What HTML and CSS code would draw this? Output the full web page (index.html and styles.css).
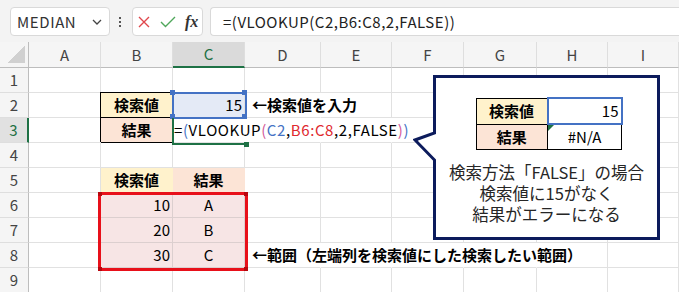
FILE: index.html
```html
<!DOCTYPE html>
<html lang="ja">
<head>
    <meta charset="UTF-8">
    <meta name="viewport" content="width=device-width, initial-scale=1.0">
    <title>VLOOKUP FALSE</title>
    <link rel="stylesheet" href="styles.css">
</head>
<body>
    <div class="toolbar">
        <div class="namebox">
            <span>MEDIAN</span>
            <svg width="10" height="6" viewBox="0 0 10 6"><polyline points="1,1 5,5 9,1" fill="none" stroke="#444" stroke-width="1.3"/></svg>
        </div>
        <div class="kebab"><i></i><i></i><i></i></div>
        <div class="fx-box">
            <svg width="12" height="12" viewBox="0 0 12 12"><path d="M1 1 L11 11 M11 1 L1 11" stroke="#e0474c" stroke-width="1.4" fill="none"/></svg>
            <svg width="16" height="12" viewBox="0 0 16 12"><polyline points="1,6 5.5,10.5 15,1" stroke="#4fa75b" stroke-width="1.4" fill="none"/></svg>
            <span class="fx">fx</span>
        </div>
        <div class="formula-bar">=(VLOOKUP(C2,B6:C8,2,FALSE))</div>
    </div>

    <div class="sheet">
        <div class="corner"></div>
        <div class="col">A</div><div class="col">B</div><div class="col on">C</div><div class="col">D</div><div class="col">E</div><div class="col">F</div><div class="col">G</div><div class="col">H</div><div class="col">I</div>

        <div class="row">1</div>
        <div class="c"></div><div class="c"></div><div class="c"></div><div class="c"></div><div class="c"></div><div class="c"></div><div class="c"></div><div class="c"></div><div class="c"></div>

        <div class="row">2</div>
        <div class="c"></div>
        <div class="c lbl key boxed">検索値</div>
        <div class="c num ref-fill">15</div>
        <div class="c note spill">←検索値を入力</div>
        <div class="c"></div><div class="c"></div><div class="c"></div><div class="c"></div><div class="c"></div>

        <div class="row on">3</div>
        <div class="c"></div>
        <div class="c lbl res boxed">結果</div>
        <div class="c spill formula">=<span class="p-blue">(</span>VLOOKUP<span class="p-pink">(</span><span class="r-blue">C2</span>,<span class="r-red">B6:C8</span>,2,FALSE<span class="p-pink">)</span><span class="p-blue">)</span></div>
        <div class="c spill"></div><div class="c spill"></div>
        <div class="c"></div><div class="c"></div><div class="c"></div><div class="c"></div>

        <div class="row">4</div>
        <div class="c"></div><div class="c"></div><div class="c"></div><div class="c"></div><div class="c"></div><div class="c"></div><div class="c"></div><div class="c"></div><div class="c"></div>

        <div class="row">5</div>
        <div class="c"></div>
        <div class="c lbl key">検索値</div>
        <div class="c lbl res">結果</div>
        <div class="c"></div><div class="c"></div><div class="c"></div><div class="c"></div><div class="c"></div><div class="c"></div>

        <div class="row">6</div>
        <div class="c"></div>
        <div class="c num rng">10</div>
        <div class="c ctr rng">A</div>
        <div class="c"></div><div class="c"></div><div class="c"></div><div class="c"></div><div class="c"></div><div class="c"></div>

        <div class="row">7</div>
        <div class="c"></div>
        <div class="c num rng">20</div>
        <div class="c ctr rng">B</div>
        <div class="c"></div><div class="c"></div><div class="c"></div><div class="c"></div><div class="c"></div><div class="c"></div>

        <div class="row">8</div>
        <div class="c"></div>
        <div class="c num rng">30</div>
        <div class="c ctr rng">C</div>
        <div class="c note spill">←範囲（左端列を検索値にした検索したい範囲）</div>
        <div class="c spill"></div><div class="c spill"></div><div class="c spill"></div>
        <div class="c"></div><div class="c"></div>

        <div class="row">9</div>
        <div class="c"></div><div class="c"></div><div class="c"></div><div class="c"></div><div class="c"></div><div class="c"></div><div class="c"></div><div class="c"></div><div class="c"></div>

        <!-- selections drawn over the grid -->
        <div class="sel-ref"></div>
        <div class="sel-active"></div>
        <div class="sel-range"></div>

        <div class="callout">
            <svg class="callout-shape" width="249" height="169" viewBox="0 0 249 169">
                <path d="M21.5 3.5 H245.5 V165.5 H21.5 V87 L2 67 L21.5 60 Z" fill="#fff" stroke="#0c1b5c" stroke-width="3" stroke-linejoin="miter"/>
            </svg>
            <table class="mini">
                <tr><td class="lbl key">検索値</td><td class="num hit">15</td></tr>
                <tr><td class="lbl res">結果</td><td class="ctr err">#N/A</td></tr>
            </table>
            <p class="callout-text">検索方法「FALSE」の場合<br>検索値に15がなく<br>結果がエラーになる</p>
        </div>
    </div>
</body>
</html>
```

FILE: styles.css
```css
body {
    margin: 0;
    width: 679px;
    height: 292px;
    overflow: hidden;
    background: #fff;
    font-family: "Noto Sans CJK JP", sans-serif;
    color: #000;
}

/* formula bar */
.toolbar {
    display: flex;
    align-items: flex-start;
    height: 42px;
    padding: 7px 0 0 10px;
    box-sizing: border-box;
    background: #f3f3f3;
}
.namebox {
    width: 100px;
    height: 29px;
    box-sizing: border-box;
    display: flex;
    align-items: center;
    justify-content: space-between;
    padding: 0 7px 0 6px;
    background: #fff;
    border: 1px solid #d9d9d9;
    border-radius: 4px;
    font-size: 15px;
    letter-spacing: 0.6px;
    color: #333;
}
.kebab {
    display: flex;
    flex-direction: column;
    gap: 2px;
    margin: 10px 11px 0 9px;
}
.kebab i {
    width: 2px;
    height: 2px;
    background: #555;
}
.fx-box {
    width: 71px;
    height: 29px;
    box-sizing: border-box;
    display: flex;
    align-items: center;
    gap: 10px;
    padding-left: 5px;
    background: #fff;
    border: 1px solid #d9d9d9;
    border-radius: 4px;
}
.fx {
    font-family: "Liberation Serif", serif;
    font-style: italic;
    font-weight: bold;
    font-size: 16px;
    color: #333;
    margin-left: -1px;
}
.formula-bar {
    flex: 1;
    height: 29px;
    box-sizing: border-box;
    margin-left: 7px;
    padding-left: 12px;
    background: #fff;
    border: 1px solid #d9d9d9;
    border-right: none;
    border-radius: 4px 0 0 4px;
    font-size: 15px;
    line-height: 27px;
    letter-spacing: 0.5px;
    color: #222;
}

/* grid */
.sheet {
    position: relative;
    display: grid;
    grid-template-columns: 29px 72px 72px 72px 76px 71px 72px 73px 71px 71px;
    grid-template-rows: 26px repeat(9, 25px);
}
.corner {
    background: linear-gradient(135deg, transparent 50%, #d0d0d0 50%) right 3px bottom 4px / 17px 17px no-repeat, #f5f5f5;
    border-right: 1px solid #bdbdbd;
    border-bottom: 1px solid #bdbdbd;
}
.col {
    background: #f5f5f5;
    border-right: 1px solid #dedede;
    border-bottom: 1px solid #bdbdbd;
    text-align: center;
    font-size: 15px;
    line-height: 25px;
    color: #444;
}
.col.on {
    background: #dadada;
    color: #1e7145;
    border-bottom: 2px solid #1e7145;
    line-height: 24px;
}
.row {
    background: #f5f5f5;
    border-right: 1px solid #bdbdbd;
    border-bottom: 1px solid #dedede;
    text-align: center;
    font-size: 15px;
    line-height: 24px;
    color: #444;
}
.row.on {
    background: #e1e1e1;
    color: #1e7145;
    border-right: 2px solid #1e7145;
}
.c {
    border-right: 1px solid #e1e1e1;
    border-bottom: 1px solid #e1e1e1;
    padding: 0 2px;
    font-size: 15px;
    line-height: 24px;
    white-space: nowrap;
}
.c.spill {
    border-right-color: transparent;
}
.num { text-align: right; }
.ctr { text-align: center; }
.lbl {
    text-align: center;
    font-weight: bold;
}
.key { background: #fff2cc; border-color: #fff2cc; }
.res { background: #fce4d6; border-color: #fce4d6; }
.c.boxed {
    border-color: #000;
    box-shadow: -1px -1px 0 #000;
}
.ref-fill { background: #e4eaf6; }
.rng {
    background: #f7e5e5;
    border-color: #dccfcf;
}
.note { font-weight: bold; padding-left: 7px; }
.formula {
    padding-left: 1px;
    letter-spacing: 0.6px;
}
.p-blue, .r-blue { color: #4472c4; }
.p-pink { color: #d2589a; }
.r-red { color: #e0292f; }

/* selection frames */
.sel-ref {
    position: absolute;
    left: 172px;
    top: 50px;
    width: 75px;
    height: 27px;
    box-sizing: border-box;
    border: 2px solid #4472c4;
}
.sel-ref::before {
    content: "";
    position: absolute;
    left: -4px;
    top: -4px;
    width: 5px;
    height: 5px;
    background: #4472c4;
    box-shadow: 72px 0 0 #4472c4, 0 24px 0 #4472c4, 72px 24px 0 #4472c4;
}
.sel-active {
    position: absolute;
    left: 172px;
    top: 76px;
    width: 73px;
    height: 27px;
    box-sizing: border-box;
    border-left: 2px solid #1e7145;
    border-bottom: 2px solid #1e7145;
}
.sel-active::after {
    content: "";
    position: absolute;
    right: -4px;
    bottom: -4px;
    width: 5px;
    height: 5px;
    background: #1e7145;
}
.sel-range {
    position: absolute;
    left: 98px;
    top: 150px;
    width: 150px;
    height: 79px;
    box-sizing: border-box;
    border: 3px solid #e8101a;
}
.sel-range::before {
    content: "";
    position: absolute;
    left: -3px;
    top: -3px;
    width: 4px;
    height: 4px;
    background: #b8060d;
    box-shadow: 146px 0 0 #b8060d, 0 75px 0 #b8060d, 146px 75px 0 #b8060d;
}

/* callout */
.callout {
    position: absolute;
    left: 413px;
    top: 31px;
    width: 249px;
    height: 169px;
    display: flex;
    flex-direction: column;
    align-items: center;
    padding: 24px 2px 0 20px;
    box-sizing: border-box;
}
.callout-shape {
    position: absolute;
    left: 0;
    top: 0;
}
.mini {
    position: relative;
    border-collapse: collapse;
    margin-left: 5px;
    font-size: 15px;
}
.mini td {
    height: 24px;
    padding: 0 2px;
    border: 1px solid #000;
    line-height: 22px;
}
.mini .lbl { width: 66px; }
.mini .hit,
.mini .err {
    width: 68px;
    background: #fff;
}
.mini .hit { border: 2px solid #4472c4; }
.mini .err { position: relative; }
.mini .err::before {
    content: "";
    position: absolute;
    left: 0;
    top: 0;
    border-top: 6px solid #1e7145;
    border-right: 6px solid transparent;
}
.callout-text {
    position: relative;
    margin: 12px 0 0;
    font-size: 16.5px;
    line-height: 21px;
    text-align: center;
    color: #262626;
}
```
